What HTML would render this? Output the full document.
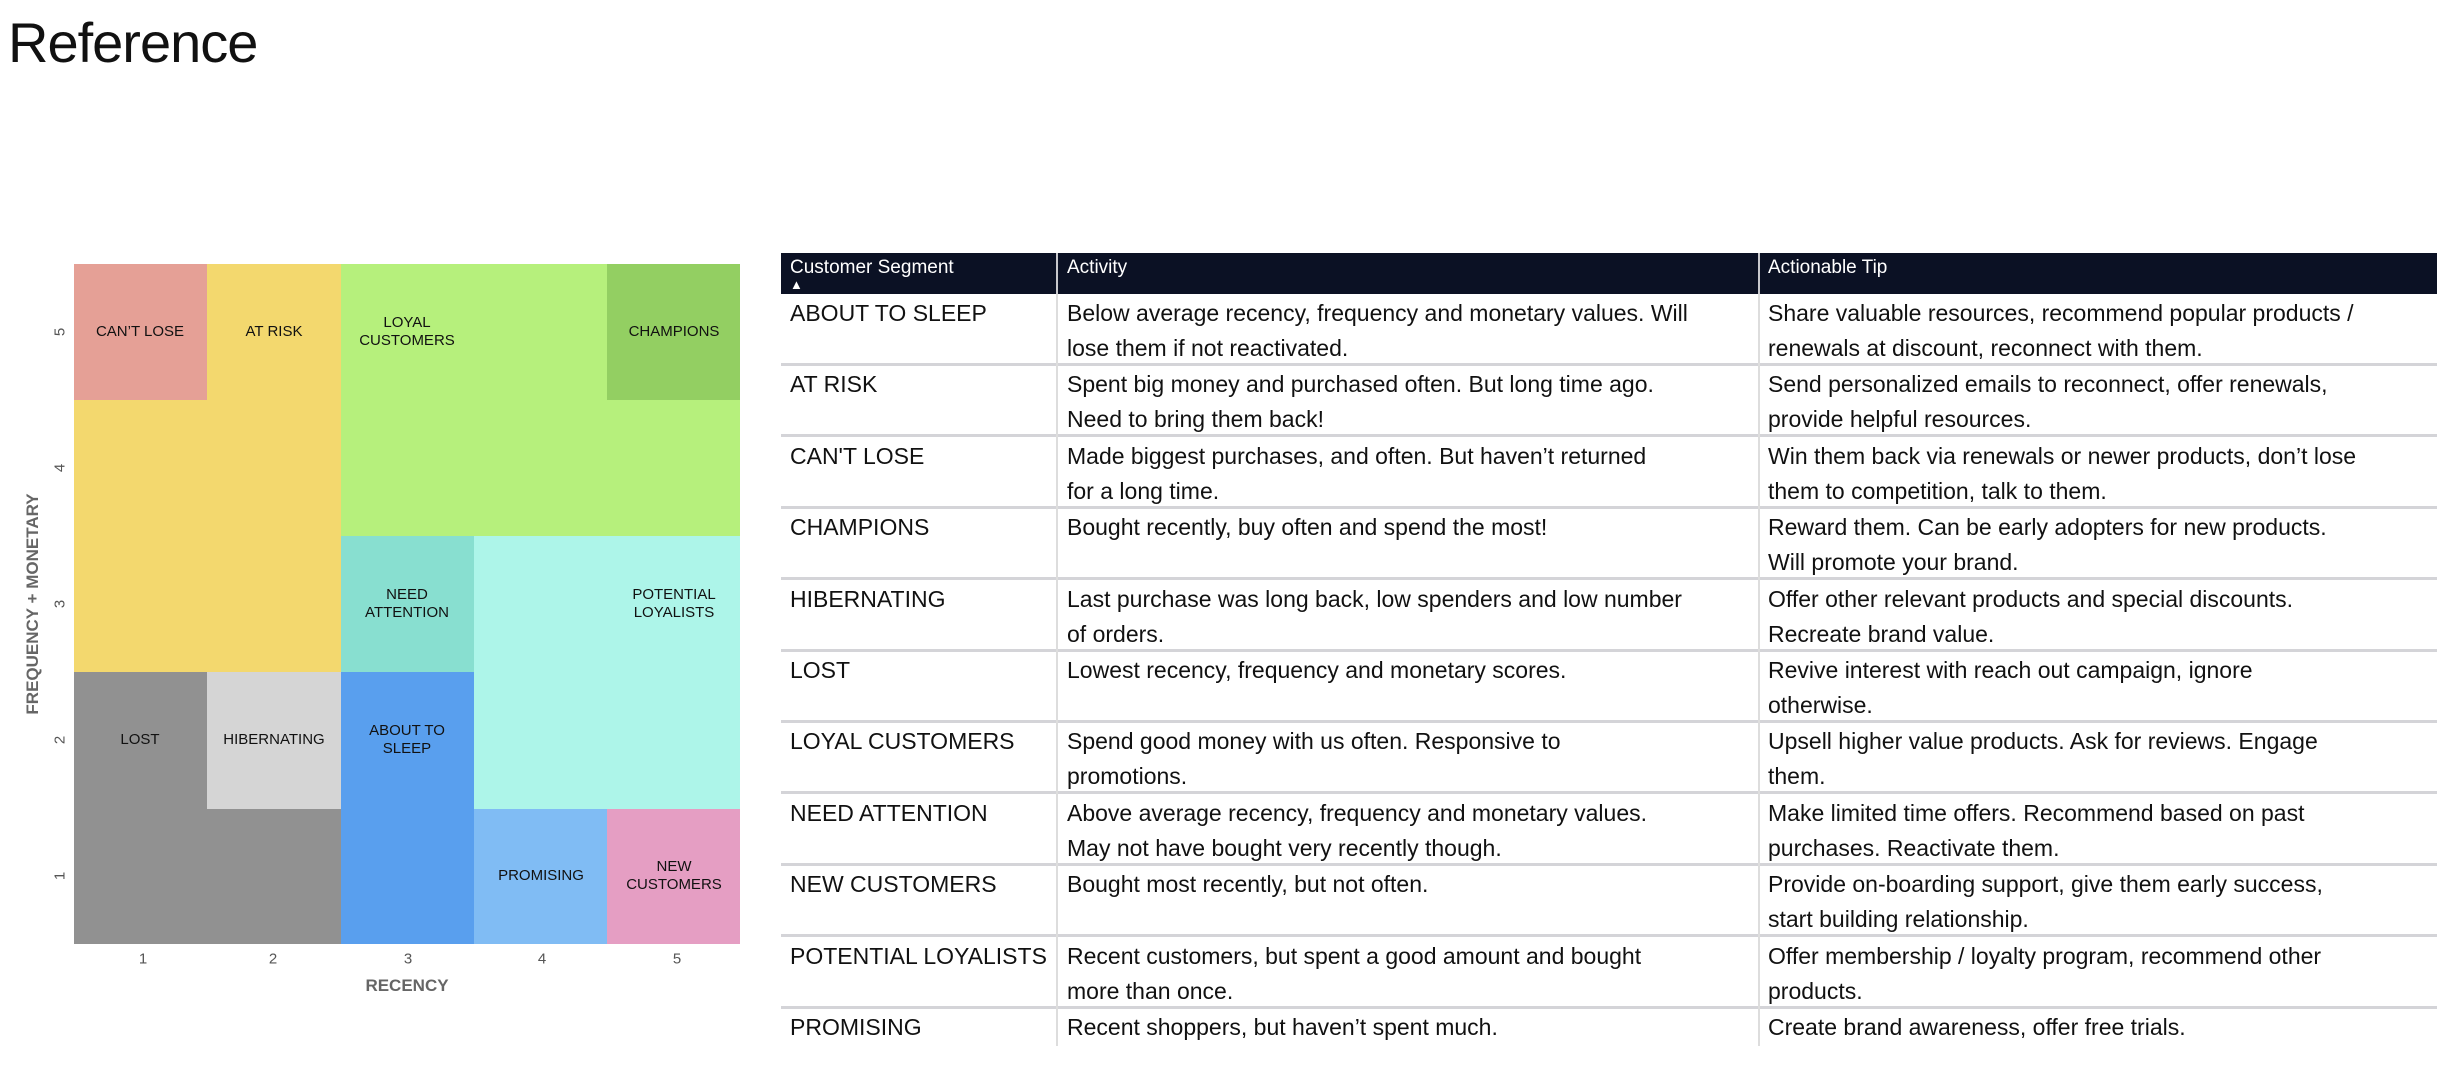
<!DOCTYPE html>
<html><head><meta charset="utf-8">
<style>
*{margin:0;padding:0;box-sizing:border-box}
body{width:2464px;height:1066px;background:#fff;position:relative;overflow:hidden;font-family:"Liberation Sans",sans-serif}
.title{position:absolute;left:8px;top:10px;font-size:56px;color:#111;letter-spacing:-1px}
.c{position:absolute}
.lb{position:absolute;font-size:15px;color:#111;text-align:center;line-height:18px;transform:translate(-50%,-50%);white-space:nowrap}
.tk{position:absolute;font-size:15px;color:#555;transform:translate(-50%,-50%)}
.hd{position:absolute;left:781px;top:253px;width:1656px;height:41px;background:#0b1124;color:#fff;font-size:19px;line-height:24px}
.hd div{position:absolute;top:3px}
.row{position:absolute;left:781px;width:1656px;height:72px;border-bottom:3px solid #d4d4d8;font-size:23px;color:#111;line-height:35px;white-space:nowrap}
.row div{position:absolute;top:2px}
.a{left:9px}.b{left:286px}.t{left:987px}
.vl{position:absolute;width:2px;background:#ddd}
</style></head><body>
<div class="title">Reference</div>

<div class="c" style="left:74px;top:264px;width:267px;height:408px;background:#f3d86e"></div>
<div class="c" style="left:74px;top:264px;width:133px;height:136px;background:#e5a096"></div>
<div class="c" style="left:341px;top:264px;width:399px;height:272px;background:#b6f07c"></div>
<div class="c" style="left:607px;top:264px;width:133px;height:136px;background:#93cf62"></div>
<div class="c" style="left:341px;top:536px;width:133px;height:136px;background:#88dfd0"></div>
<div class="c" style="left:474px;top:536px;width:266px;height:273px;background:#adf5e9"></div>
<div class="c" style="left:74px;top:672px;width:267px;height:272px;background:#919191"></div>
<div class="c" style="left:207px;top:672px;width:134px;height:137px;background:#d5d5d5"></div>
<div class="c" style="left:341px;top:672px;width:133px;height:272px;background:#599fee"></div>
<div class="c" style="left:474px;top:809px;width:133px;height:135px;background:#80bcf4"></div>
<div class="c" style="left:607px;top:809px;width:133px;height:135px;background:#e59ec3"></div>

<div class="lb" style="left:140px;top:332px">CAN’T LOSE</div>
<div class="lb" style="left:274px;top:332px">AT RISK</div>
<div class="lb" style="left:407px;top:332px">LOYAL<br>CUSTOMERS</div>
<div class="lb" style="left:674px;top:332px">CHAMPIONS</div>
<div class="lb" style="left:407px;top:604px">NEED<br>ATTENTION</div>
<div class="lb" style="left:674px;top:604px">POTENTIAL<br>LOYALISTS</div>
<div class="lb" style="left:140px;top:740px">LOST</div>
<div class="lb" style="left:274px;top:740px">HIBERNATING</div>
<div class="lb" style="left:407px;top:740px">ABOUT TO<br>SLEEP</div>
<div class="lb" style="left:541px;top:876px">PROMISING</div>
<div class="lb" style="left:674px;top:876px">NEW<br>CUSTOMERS</div>

<div class="tk" style="left:143px;top:959px">1</div>
<div class="tk" style="left:273px;top:959px">2</div>
<div class="tk" style="left:408px;top:959px">3</div>
<div class="tk" style="left:542px;top:959px">4</div>
<div class="tk" style="left:677px;top:959px">5</div>
<div class="tk" style="left:407px;top:986px;font-weight:bold;font-size:17px;color:#666">RECENCY</div>
<div class="tk" style="left:60px;top:332px;transform:translate(-50%,-50%) rotate(-90deg)">5</div>
<div class="tk" style="left:60px;top:468px;transform:translate(-50%,-50%) rotate(-90deg)">4</div>
<div class="tk" style="left:60px;top:604px;transform:translate(-50%,-50%) rotate(-90deg)">3</div>
<div class="tk" style="left:60px;top:740px;transform:translate(-50%,-50%) rotate(-90deg)">2</div>
<div class="tk" style="left:60px;top:876px;transform:translate(-50%,-50%) rotate(-90deg)">1</div>
<div class="tk" style="left:33px;top:604px;font-weight:bold;font-size:17px;color:#666;white-space:nowrap;transform:translate(-50%,-50%) rotate(-90deg)">FREQUENCY + MONETARY</div>

<div class="hd">
<div class="a">Customer Segment<br><span style="font-size:13px;position:relative;top:-8px">▲</span></div>
<div class="b">Activity</div><div class="t">Actionable Tip</div>
<span style="position:absolute;left:275px;top:0;width:2px;height:41px;background:#c8c8cc"></span>
<span style="position:absolute;left:977px;top:0;width:2px;height:41px;background:#c8c8cc"></span>
</div>

<div class="row" style="top:294px"><div class="a">ABOUT TO SLEEP</div><div class="b">Below average recency, frequency and monetary values. Will<br>lose them if not reactivated.</div><div class="t">Share valuable resources, recommend popular products /<br>renewals at discount, reconnect with them.</div></div>
<div class="row" style="top:365px"><div class="a">AT RISK</div><div class="b">Spent big money and purchased often. But long time ago.<br>Need to bring them back!</div><div class="t">Send personalized emails to reconnect, offer renewals,<br>provide helpful resources.</div></div>
<div class="row" style="top:437px"><div class="a">CAN'T LOSE</div><div class="b">Made biggest purchases, and often. But haven’t returned<br>for a long time.</div><div class="t">Win them back via renewals or newer products, don’t lose<br>them to competition, talk to them.</div></div>
<div class="row" style="top:508px"><div class="a">CHAMPIONS</div><div class="b">Bought recently, buy often and spend the most!</div><div class="t">Reward them. Can be early adopters for new products.<br>Will promote your brand.</div></div>
<div class="row" style="top:580px"><div class="a">HIBERNATING</div><div class="b">Last purchase was long back, low spenders and low number<br>of orders.</div><div class="t">Offer other relevant products and special discounts.<br>Recreate brand value.</div></div>
<div class="row" style="top:651px"><div class="a">LOST</div><div class="b">Lowest recency, frequency and monetary scores.</div><div class="t">Revive interest with reach out campaign, ignore<br>otherwise.</div></div>
<div class="row" style="top:722px"><div class="a">LOYAL CUSTOMERS</div><div class="b">Spend good money with us often. Responsive to<br>promotions.</div><div class="t">Upsell higher value products. Ask for reviews. Engage<br>them.</div></div>
<div class="row" style="top:794px"><div class="a">NEED ATTENTION</div><div class="b">Above average recency, frequency and monetary values.<br>May not have bought very recently though.</div><div class="t">Make limited time offers. Recommend based on past<br>purchases. Reactivate them.</div></div>
<div class="row" style="top:865px"><div class="a">NEW CUSTOMERS</div><div class="b">Bought most recently, but not often.</div><div class="t">Provide on-boarding support, give them early success,<br>start building relationship.</div></div>
<div class="row" style="top:937px"><div class="a">POTENTIAL LOYALISTS</div><div class="b">Recent customers, but spent a good amount and bought<br>more than once.</div><div class="t">Offer membership / loyalty program, recommend other<br>products.</div></div>
<div class="row" style="top:1008px;height:38px;border-bottom:none"><div class="a">PROMISING</div><div class="b">Recent shoppers, but haven’t spent much.</div><div class="t">Create brand awareness, offer free trials.</div></div>

<div class="vl" style="left:1056px;top:294px;height:752px"></div>
<div class="vl" style="left:1758px;top:294px;height:752px"></div>
</body></html>
